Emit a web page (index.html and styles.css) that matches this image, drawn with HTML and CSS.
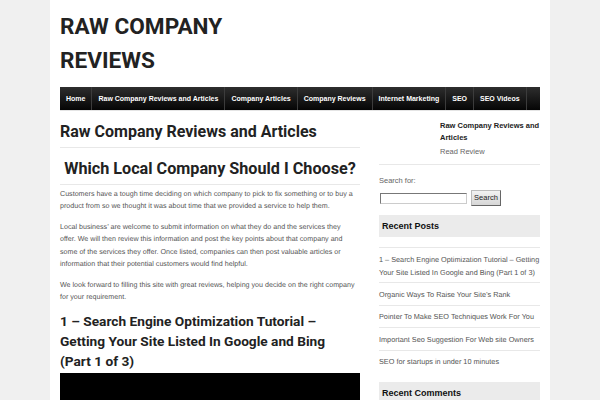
FILE: index.html
```html
<!DOCTYPE html>
<html>
<head>
<meta charset="utf-8">
<link rel="stylesheet" href="styles.css">
</head>
<body>
<div class="page">
  <header class="site-header">
    <div class="site-title">RAW COMPANY<br>REVIEWS</div>
  </header>
  <nav class="nav">
    <a class="nav-item">Home</a>
    <a class="nav-item">Raw Company Reviews and Articles</a>
    <a class="nav-item">Company Articles</a>
    <a class="nav-item">Company Reviews</a>
    <a class="nav-item">Internet Marketing</a>
    <a class="nav-item">SEO</a>
    <a class="nav-item">SEO Videos</a>
  </nav>
  <div class="main">
    <div class="content">
      <h1 class="page-title">Raw Company Reviews and Articles</h1>
      <h2 class="sub-title">Which Local Company Should I Choose?</h2>
      <p class="para">Customers have a tough time deciding on which company to pick to fix something or to buy a product from so we thought it was about time that we provided a service to help them.</p>
      <p class="para">Local business’ are welcome to submit information on what they do and the services they offer. We will then review this information and post the key points about that company and some of the services they offer. Once listed, companies can then post valuable articles or information that their potential customers would find helpful.</p>
      <p class="para">We look forward to filling this site with great reviews, helping you decide on the right company for your requirement.</p>
      <h3 class="post-title">1 – Search Engine Optimization Tutorial – Getting Your Site Listed In Google and Bing (Part 1 of 3)</h3>
      <div class="video"></div>
    </div>
    <aside class="sidebar">
      <div class="feature">
        <div class="feature-thumb"></div>
        <div class="feature-text">
          <div class="feature-title">Raw Company Reviews and Articles</div>
          <div class="feature-link">Read Review</div>
        </div>
      </div>
      <div class="search">
        <div class="search-label">Search for:</div>
        <div class="search-row">
          <span class="search-input"></span>
          <span class="search-btn">Search</span>
        </div>
      </div>
      <div class="widget-title">Recent Posts</div>
      <ul class="post-list">
        <li class="post-long"><span class="post-wide">1 – Search Engine Optimization Tutorial – Getting Your Site Listed In Google and Bing (Part 1 of 3)</span></li>
        <li>Organic Ways To Raise Your Site’s Rank</li>
        <li>Pointer To Make SEO Techniques Work For You</li>
        <li>Important Seo Suggestion For Web site Owners</li>
        <li>SEO for startups in under 10 minutes</li>
      </ul>
      <div class="widget-title widget-title-last">Recent Comments</div>
    </aside>
  </div>
</div>
</body>
</html>
```

FILE: styles.css
```css
* { box-sizing: border-box; }
html, body { margin: 0; padding: 0; }
body {
  background: #f0f0f0;
  font-family: "Liberation Sans", Arial, sans-serif;
  color: #444;
  overflow: hidden;
}
.page {
  width: 500px;
  height: 400px;
  overflow: hidden;
  margin: 0 auto;
  background: #fff;
  padding: 0 10px;
}
.site-header {
  padding-top: 10px;
  height: 87px;
}
.site-title {
  font-family: Roboto, "Liberation Sans", sans-serif;
  font-size: 22.6px;
  line-height: 34px;
  font-weight: bold;
  color: #222;
}
.nav {
  display: flex;
  height: 24px;
  background: linear-gradient(#2e2e2e, #050505);
  border-bottom: 1px solid #e4e4e4;
}
.nav-item {
  color: #fff;
  font-size: 7px;
  font-weight: bold;
  line-height: 23px;
  padding: 0 6px;
  border-right: 1px solid #3c3c3c;
}
.main {
  display: flex;
  gap: 19px;
}
.content {
  width: 300px;
  flex-shrink: 0;
}
.page-title {
  margin: 0;
  font-family: Roboto, "Liberation Sans", sans-serif;
  padding-top: 11px;
  font-size: 16px;
  line-height: 20px;
  color: #222;
  padding-bottom: 5px;
  border-bottom: 1px solid #e8e8e8;
}
.sub-title {
  margin: 0;
  font-family: Roboto, "Liberation Sans", sans-serif;
  font-size: 16.2px;
  line-height: 22px;
  text-align: center;
  color: #222;
  padding: 10px 0 4px;
  border-bottom: 1px solid #e8e8e8;
}
.para {
  text-rendering: geometricPrecision;
  font-size: 7.13px;
  line-height: 12.3px;
  margin: 3px 0 8.5px;
  padding-right: 4px;
  color: #555;
}
.para:last-of-type { margin-bottom: 7px; }
.post-title {
  margin: 0;
  font-family: Roboto, "Liberation Sans", sans-serif;
  font-size: 13.7px;
  line-height: 20px;
  color: #222;
  padding-top: 0.5px;
  padding-right: 6px;
}
.video {
  margin-top: 2px;
  height: 30px;
  background: #000;
}
.sidebar {
  width: 161px;
  flex-shrink: 0;
}
.feature {
  display: flex;
  padding-top: 9px;
  height: 54px;
  border-bottom: 1px solid #e8e8e8;
}
.feature-thumb { width: 61px; flex-shrink: 0; }
.feature-title {
  font-size: 7.5px;
  font-weight: bold;
  line-height: 12px;
  color: #222;
}
.feature-link {
  font-size: 7.5px;
  line-height: 15px;
  color: #666;
}
.search { padding-top: 10px; }
.search-label {
  font-size: 7.5px;
  color: #666;
  line-height: 12px;
}
.search-row {
  display: flex;
  align-items: center;
  gap: 4px;
  margin-top: 3px;
  margin-left: 1px;
}
.search-input {
  width: 87px;
  height: 11px;
  border: 1px solid #777;
  border-right-color: #ccc;
  border-bottom-color: #ccc;
  background: #fff;
}
.search-btn {
  width: 30px;
  height: 16px;
  font-size: 7.5px;
  line-height: 14px;
  text-align: center;
  color: #222;
  background: linear-gradient(#f2f2f2, #d6d6d6);
  border: 1px solid #bbb;
  border-right-color: #666;
  border-bottom-color: #666;
}
.widget-title {
  margin-top: 9px;
  background: #ebebeb;
  height: 22px;
  line-height: 22px;
  padding-left: 3px;
  font-size: 9px;
  font-weight: bold;
  color: #111;
}
.widget-title-last { margin-top: 9.5px; }
.post-list {
  list-style: none;
  margin: 10px 0 0;
  padding: 0;
  border-top: 1px solid #e8e8e8;
}
.post-list li {
  text-rendering: geometricPrecision;
  font-size: 7.3px;
  line-height: 13px;
  color: #555;
  padding: 4.5px 0 4px;
  border-bottom: 1px solid #e8e8e8;
}
.post-list .post-long { padding-bottom: 3.5px; }
.post-wide {
  display: block;
  margin-right: -8px;
}
.post-list li:last-child { border-bottom: 0; }
```
